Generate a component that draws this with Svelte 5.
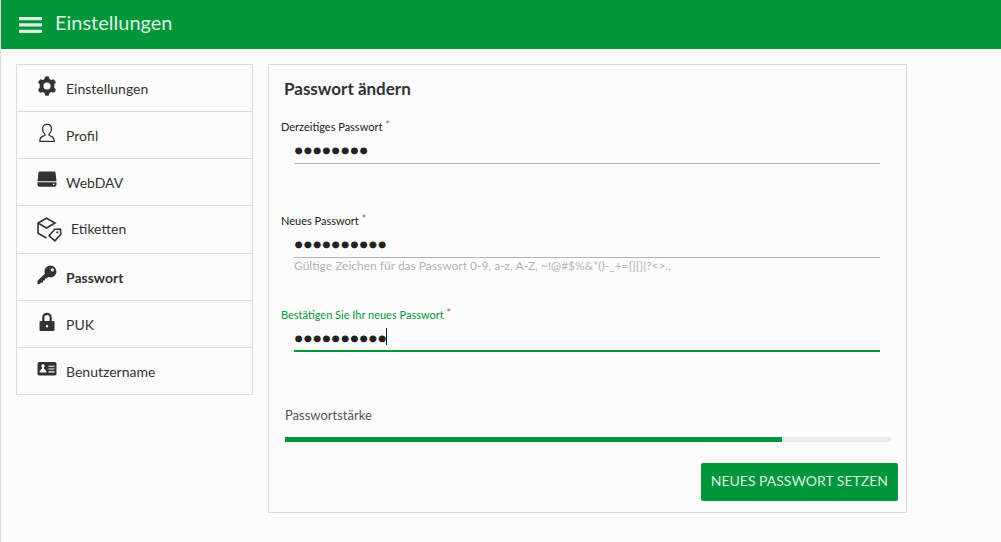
<script lang="ts">
  import { onMount } from 'svelte';

  const items = [
    { icon: 'gear', label: 'Einstellungen' },
    { icon: 'user', label: 'Profil' },
    { icon: 'drive', label: 'WebDAV' },
    { icon: 'tag', label: 'Etiketten' },
    { icon: 'key', label: 'Passwort' },
    { icon: 'lock', label: 'PUK' },
    { icon: 'card', label: 'Benutzername' }
  ];

  let active = $state('Passwort');
  let current = $state('geheim12');
  let next = $state('neuesPass1');
  let confirm = $state('neuesPass1');
  let focused = $state(false);
  let strength = $derived(Math.min(100, Math.round(next.length * 8.2)));
  let confirmInput: HTMLInputElement;

  onMount(() => confirmInput.focus());
</script>

<div class="page">
  <header>
    <button class="menu" type="button" aria-label="Menü">
      <svg width="23" height="16" viewBox="0 0 23 16" fill="currentColor">
        <path d="M0 0h23v3.300H0zM0 6.200h23v3.400H0zM0 12.700h23V16H0z" />
      </svg>
    </button>
    <h1>Einstellungen</h1>
  </header>

  <div class="content">
    <nav>
      {#each items as item}
        <a
          href="#{item.icon}"
          class:active={active === item.label}
          class:wide={item.icon === 'tag'}
          onclick={() => (active = item.label)}
        >
          {#if item.icon === 'gear'}
            <svg width="20" height="20" viewBox="0 0 20 20">
              <path
                fill="currentColor"
                fill-rule="evenodd"
                d="M8 .8Q10-.2 12 .8l.5 2.300 1.600.9 2.300-.8q2 1.100 2.500 3.400L17.300 8.300v3.400l1.600 1.700q-.5 2.300-2.500 3.400l-2.300-.8-1.600.9-.5 2.300q-2 1-4 0l-.5-2.300-1.600-.9-2.300.8q-2-1.100-2.500-3.400L2.700 11.700V8.300L1.100 6.600q.5-2.300 2.500-3.400l2.300.8 1.600-.9zM10 6.400a3.600 3.600 0 1 0 0 7.200 3.600 3.600 0 0 0 0-7.200z"
              />
            </svg>
          {:else if item.icon === 'user'}
            <svg width="20" height="20" viewBox="0 0 20 20">
              <path
                fill="none"
                stroke="currentColor"
                stroke-width="1.300"
                stroke-linejoin="round"
                d="M8 11.200C6.400 10 5.500 8.300 5.500 6c0-2.800 1.900-4.600 4.500-4.600s4.500 1.800 4.500 4.600c0 2.300-.9 4-2.500 5.200-.3 1 .3 1.500 1.800 2 2.400.8 3.400 2.200 3.400 5.200H2.800c0-3 1-4.400 3.400-5.200 1.500-.5 2.100-1 1.800-2z"
              />
            </svg>
          {:else if item.icon === 'drive'}
            <svg width="20" height="20" viewBox="0 0 20 20">
              <path fill="currentColor" d="M1.500 2.500q.1-1 1-1h15q.9 0 1 1l1 8.700H.5z" />
              <path
                fill="currentColor"
                fill-rule="evenodd"
                d="M.5 12.200h19v2.300q0 2.200-2 2.200h-15q-2 0-2-2.200zM16 13.800v1.200h1.500v-1.200z"
              />
            </svg>
          {:else if item.icon === 'tag'}
            <svg width="25" height="25" viewBox="0 0 25 25">
              <g fill="none" stroke="currentColor" stroke-width="1.600">
                <path d="M9.500 21L1 16.300V6L9.500 1.200 18 6l-8.500 5L1 6" />
                <path stroke-linejoin="round" d="M17.800 12.300l5.600-.3.500 5.200-6 6.700-5.900-5.200z" />
              </g>
              <circle cx="20.300" cy="15.300" r="1.100" fill="currentColor" />
            </svg>
          {:else if item.icon === 'key'}
            <svg width="20" height="20" viewBox="0 0 20 20">
              <path
                fill="currentColor"
                fill-rule="evenodd"
                d="M13.500.5a6 6 0 1 1-2.300 11.600L9.700 13.500H8v2H6v2H4.300L2.200 19.300H.5v-3.600l7.400-7A6 6 0 0 1 13.500.5zM15.300 3.200a1.600 1.600 0 1 0 0 3.200 1.600 1.600 0 0 0 0-3.200z"
              />
            </svg>
          {:else if item.icon === 'lock'}
            <svg width="20" height="20" viewBox="0 0 20 20">
              <path fill="none" stroke="currentColor" stroke-width="2.200" d="M6.300 10V5.500a3.700 3.700 0 0 1 7.400 0V10" />
              <path
                fill="currentColor"
                fill-rule="evenodd"
                d="M3.700 9h12.600q1.200 0 1.200 1.200v7.600q0 1.200-1.200 1.200H3.700q-1.200 0-1.200-1.200v-7.600Q2.500 9 3.700 9zM10 13a1.200 1.200 0 1 0 0 2.400A1.200 1.200 0 0 0 10 13z"
              />
            </svg>
          {:else}
            <svg width="20" height="20" viewBox="0 0 20 20">
              <rect x=".5" y="3" width="19" height="13.500" rx="1.800" fill="currentColor" />
              <g fill="#fcfcfc">
                <circle cx="6" cy="7" r="1.700" />
                <path d="M5 8h2v1.500l2.300 2.500v1.500H2.700V12L5 9.500z" />
                <path d="M11.500 6.700h6v1.100h-6zM11.500 9.500h6v1.100h-6zM11.500 12.300h6v1.100h-6z" />
              </g>
            </svg>
          {/if}
          <span>{item.label}</span>
        </a>
      {/each}
    </nav>

    <form onsubmit={(e) => e.preventDefault()}>
      <h2>Passwort ändern</h2>

      <div class="field">
        <label for="current">Derzeitiges Passwort <sup>*</sup></label>
        <div class="control">
          <input id="current" type="password" bind:value={current} />
        </div>
      </div>

      <div class="field">
        <label for="next">Neues Passwort <sup>*</sup></label>
        <div class="control">
          <input id="next" type="password" bind:value={next} />
        </div>
        <p class="hint">Gültige Zeichen für das Passwort 0-9, a-z, A-Z, {'~!@#$%&*()-_+={}[]|?<>.,'}</p>
      </div>

      <div class="field focused">
        <label for="confirm">Bestätigen Sie Ihr neues Passwort <sup>*</sup></label>
        <div class="control">
          <input
            id="confirm"
            type="password"
            bind:value={confirm}
            bind:this={confirmInput}
            onfocus={() => (focused = true)}
            onblur={() => (focused = false)}
          />
          {#if focused}
            <span class="caret" style="left: {confirm.length * 0.58}em"></span>
          {/if}
        </div>
      </div>

      <div class="strength">
        <span id="strength-label">Passwortstärke</span>
        <div class="bar" role="progressbar" aria-labelledby="strength-label" aria-valuenow={strength}>
          <div class="fill" style="width: {strength}%"></div>
        </div>
      </div>

      <button class="submit" type="submit">NEUES PASSWORT SETZEN</button>
    </form>
  </div>
</div>

<style>
  :global(body) {
    margin: 0;
    background: #fcfcfc;
  }

  .page {
    box-sizing: border-box;
    min-height: 100vh;
    border-left: 1px solid #dcdcdc;
    color: #333;
    font-family: Lato, 'Liberation Sans', sans-serif;
    font-size: 14px;
  }

  header {
    display: flex;
    align-items: center;
    gap: 13px;
    height: 49px;
    padding: 0 18px;
    background: #009639;
    color: #d9f0e1;
  }

  .menu {
    display: flex;
    padding: 0;
    border: 0;
    background: none;
    color: inherit;
    cursor: pointer;
  }

  h1 {
    margin: 0;
    padding-bottom: 6px;
    font-size: 20px;
    font-weight: 400;
    line-height: 24px;
  }

  .content {
    display: flex;
    align-items: flex-start;
    gap: 15px;
    padding: 15px;
  }

  nav {
    box-sizing: border-box;
    flex: 0 0 237px;
    border: 1px solid #dcdcdc;
  }

  nav a {
    display: flex;
    align-items: center;
    gap: 9px;
    height: 46px;
    padding-left: 20px;
    color: #333;
    line-height: 20px;
    text-decoration: none;
  }

  nav a + a {
    border-top: 1px solid #dcdcdc;
  }

  nav a.wide {
    height: 47px;
  }

  nav a.active {
    font-weight: 700;
  }

  nav svg {
    flex: none;
    margin-bottom: 4px;
  }

  nav span {
    padding-top: 2px;
  }

  nav .wide svg {
    margin: 0;
  }

  nav .wide span {
    padding: 0 0 2px;
  }

  form {
    box-sizing: border-box;
    display: flex;
    flex: 1;
    flex-direction: column;
    min-width: 0;
    max-width: 639px;
    padding: 12px 8px 11px 12px;
    border: 1px solid #dcdcdc;
  }

  h2 {
    margin: 0 3px 16px;
    font-size: 17px;
    font-weight: 700;
    line-height: 24px;
  }

  .field {
    height: 94px;
    color: #212121;
  }

  label {
    display: block;
    font-size: 11px;
    line-height: 20px;
  }

  sup {
    color: #777;
    font-size: 11px;
    line-height: 0;
    vertical-align: 2px;
  }

  .control {
    position: relative;
    margin: 0 18px 0 13px;
    font-size: 16px;
  }

  input {
    box-sizing: border-box;
    display: block;
    width: 100%;
    height: 27px;
    padding: 0 0 1px;
    border: 0;
    border-bottom: 1px solid #b5b5b5;
    border-radius: 0;
    outline: 0;
    background: none;
    color: #212121;
    caret-color: transparent;
    font-family: inherit;
    font-size: inherit;
    -webkit-text-stroke: 1px #212121;
  }

  .caret {
    position: absolute;
    top: 3px;
    width: 1px;
    height: 17px;
    margin-left: -1px;
    background: #212121;
  }

  .hint {
    margin: 0 13px;
    color: #b5b5b5;
    font-size: 12px;
    line-height: 16px;
  }

  .focused label {
    color: #009639;
  }

  .focused sup {
    color: #e64a19;
  }

  .focused input {
    padding-bottom: 0;
    border-bottom: 2px solid #009639;
  }

  .strength {
    margin: 6px 7px 0 4px;
    color: #555;
    font-size: 13px;
    line-height: 20px;
  }

  .bar {
    height: 5px;
    margin-top: 12px;
    background: #ececec;
  }

  .fill {
    height: 100%;
    background: #009639;
  }

  .submit {
    align-self: flex-end;
    height: 38px;
    margin-top: 21px;
    padding: 0 10px 3px;
    border: 0;
    border-radius: 2px;
    background: #009639;
    color: #d9f0e1;
    font-family: inherit;
    font-size: 14px;
    cursor: pointer;
  }
</style>
